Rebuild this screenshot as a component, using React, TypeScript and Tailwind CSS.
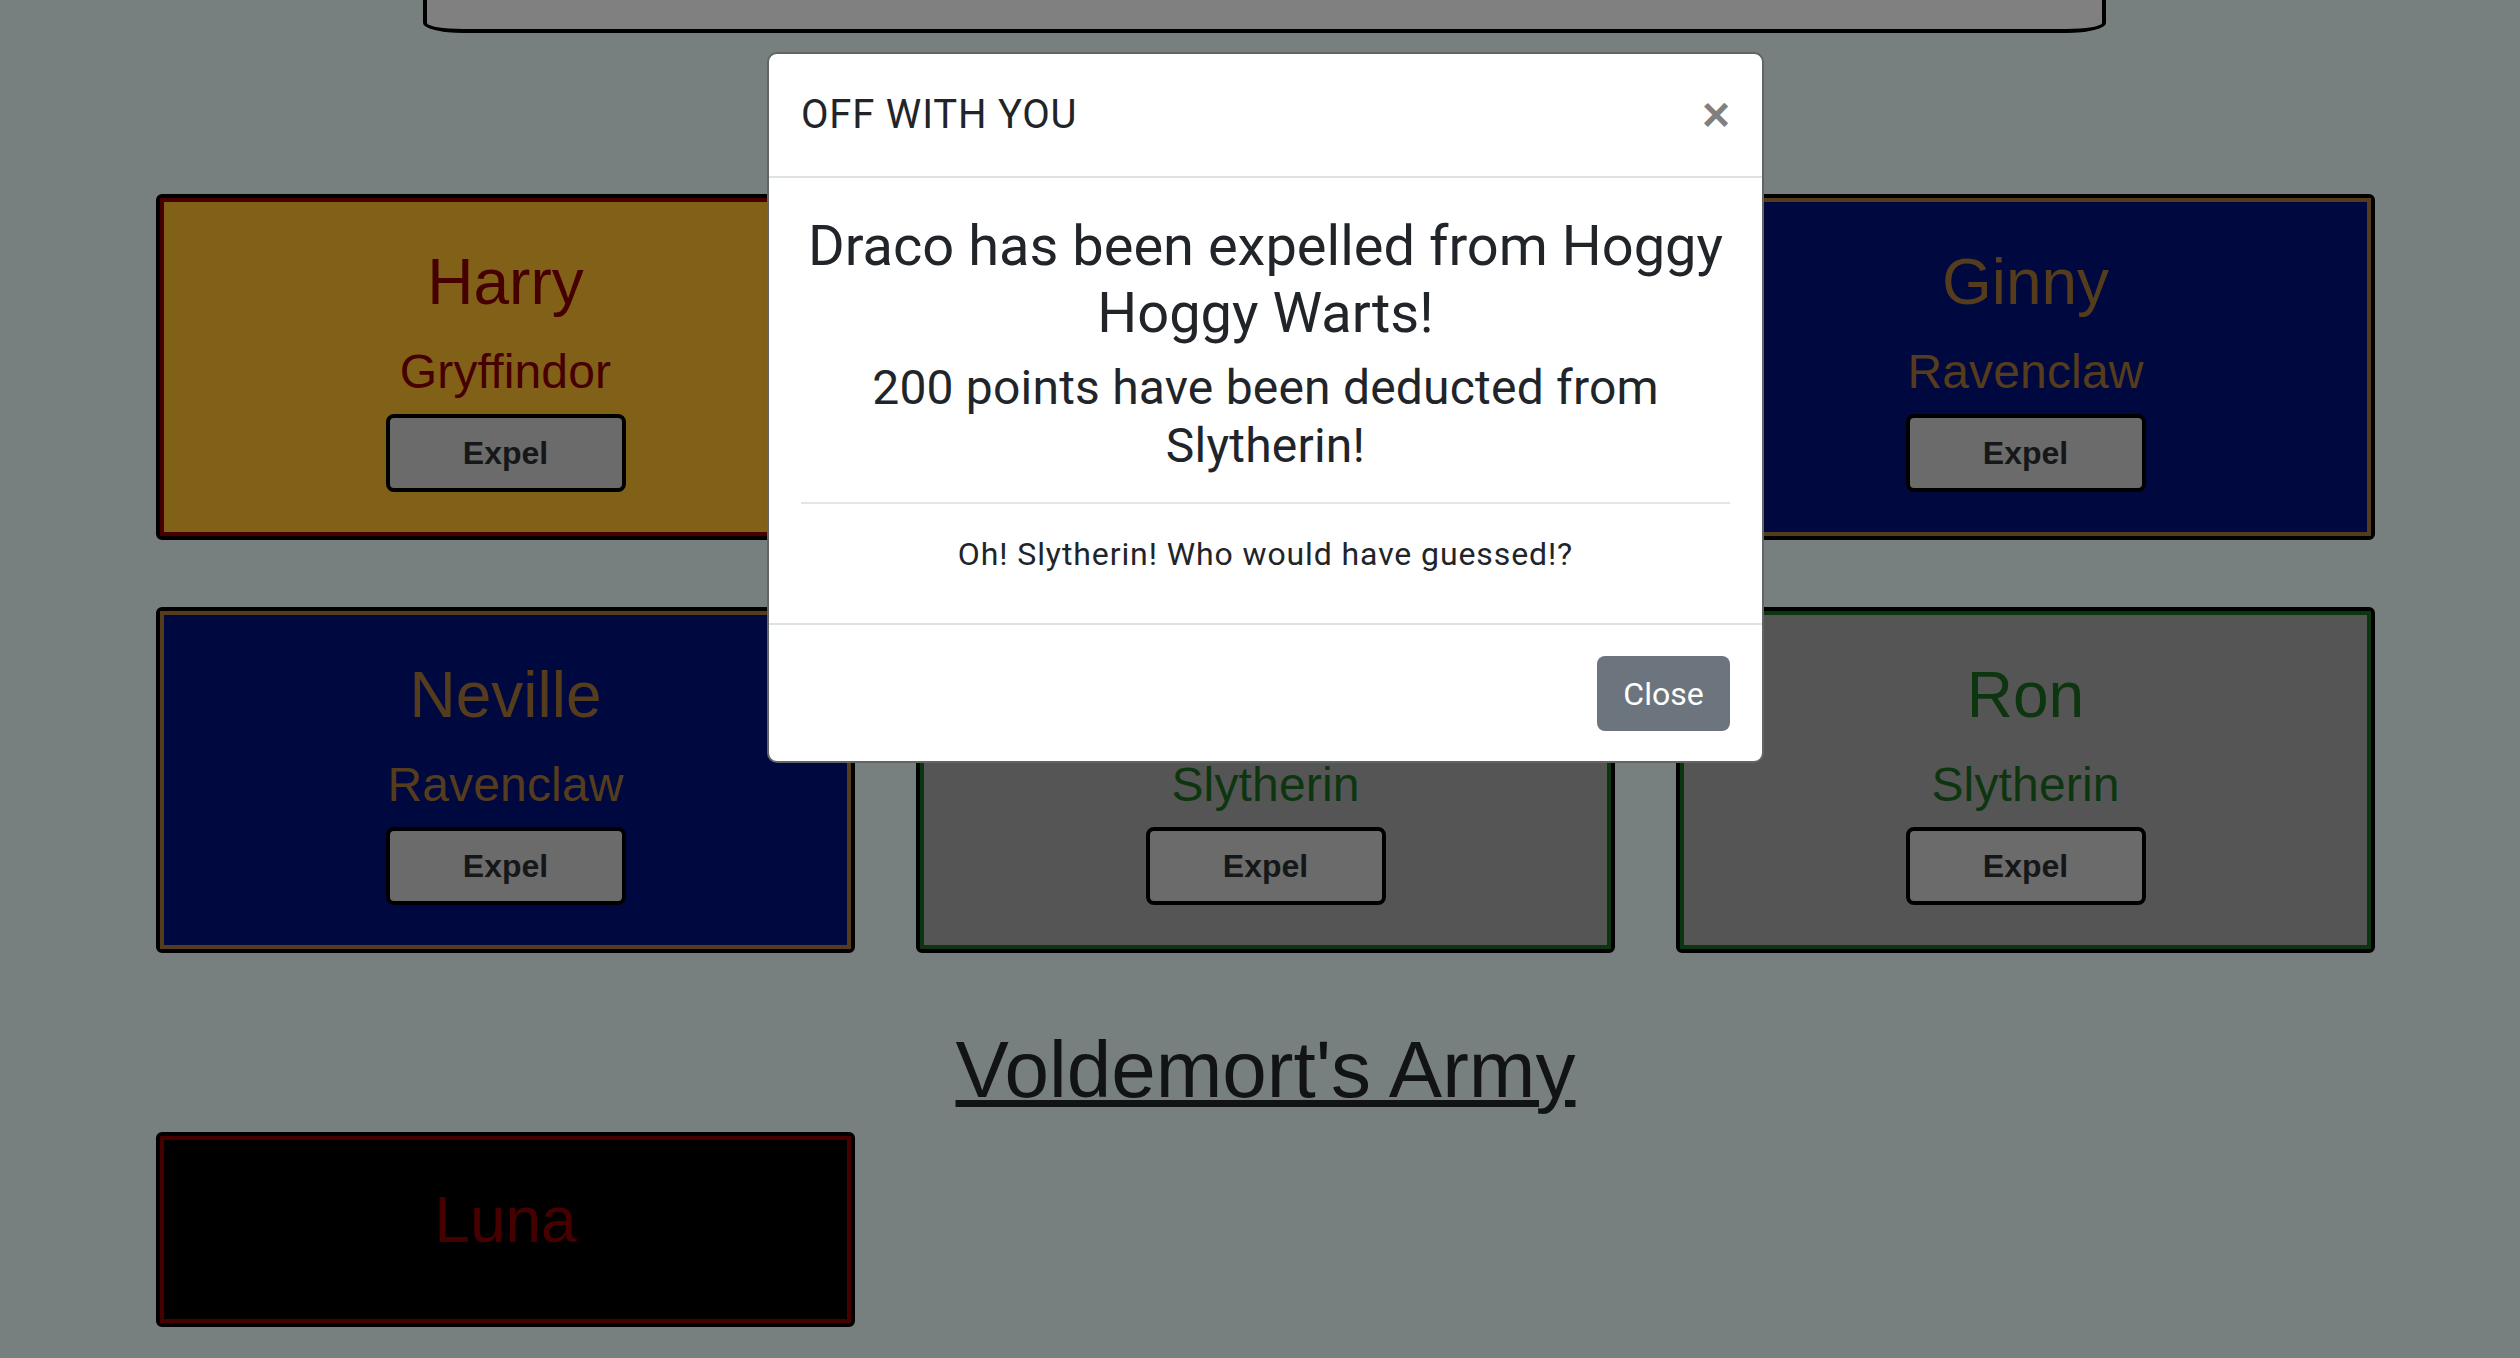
import React from "react";

type Student = {
  name: string;
  house?: string;
  fill: string;
  ring: string;
  text: string;
};

function Card({ s }: { s: Student }) {
  return (
    <div className="rounded-[6px] border-4 border-black">
      <div className={`border-4 ${s.ring} ${s.fill} ${s.text} text-center ${s.house ? "pt-[42px] pb-[40px]" : "pt-[42px] pb-[60px]"}`}>
        <h2 className="text-[64px] leading-[77px]">{s.name}</h2>
        {s.house && (
          <>
            <h4 className="mt-[22px] text-[48px] leading-[58px] tracking-[0.15px]">{s.house}</h4>
            <button className="mx-auto mt-[13px] flex h-[78px] w-[240px] items-center justify-center rounded-[8px] border-4 border-black bg-[#6b6b6b] text-[32px] font-bold text-[#151719]">
              Expel
            </button>
          </>
        )}
      </div>
    </div>
  );
}

const gold = { fill: "bg-[#816018]", ring: "border-[#470000]", text: "text-[#470000]" };
const blue = { fill: "bg-[#00093f]", ring: "border-[#553c1c]", text: "text-[#553c1c]" };
const green = { fill: "bg-[#555555]", ring: "border-[#0d3510]", text: "text-[#0d3510]" };
const dark = { fill: "bg-black", ring: "border-[#470000]", text: "text-[#470000]" };

const students: Student[] = [
  { name: "Harry", house: "Gryffindor", ...gold },
  { name: "Draco", house: "Slytherin", ...green },
  { name: "Ginny", house: "Ravenclaw", ...blue },
  { name: "Neville", house: "Ravenclaw", ...blue },
  { name: "Draco", house: "Slytherin", ...green },
  { name: "Ron", house: "Slytherin", ...green },
];

export default function App() {
  return (
    <div className="relative h-[1358px] overflow-hidden bg-[#78807f] font-['Liberation_Sans',Arial,sans-serif]">
      <div className="ml-[423px] h-[33px] w-[1683px] rounded-b-[40px_10px] border-x-4 border-b-4 border-black bg-[#808080]" />

      <div className="ml-[156px] w-[2219px]">
        <div className="mt-[161px] grid grid-cols-3 gap-x-[61px] gap-y-[67px]">
          {students.map((s, i) => (
            <Card key={i} s={s} />
          ))}
        </div>

        <h1 className="mt-[69px] text-center text-[80px] leading-[96px] text-[#111315]">
          <span className="underline decoration-[7px] underline-offset-[3px]">Voldemort's Army</span>
        </h1>

        <div className="mt-[14px] grid grid-cols-3 gap-x-[61px]">
          <Card s={{ name: "Luna", ...dark }} />
        </div>
      </div>

      <div className="absolute left-[767px] top-[52px] w-[997px] rounded-[10px] border-2 border-[#5f6665] bg-white font-['Roboto',sans-serif] text-[#212529]">
        <div className="flex items-center justify-between border-b-2 border-[#dee2e6] px-[32px] py-[31px]">
          <h5 className="text-[40px] leading-[60px] font-normal tracking-[0.8px]">OFF WITH YOU</h5>
          <button className="font-['Liberation_Sans',Arial,sans-serif] text-[48px] font-bold leading-none text-[#808080]">×</button>
        </div>
        <div className="px-[32px] pt-[35px] pb-[45px] text-center">
          <h3 className="text-[56px] leading-[67px] font-normal">Draco has been expelled from Hoggy Hoggy Warts!</h3>
          <h4 className="mt-[12px] text-[48px] leading-[58px] font-normal tracking-[0.2px]">200 points have been deducted from Slytherin!</h4>
          <hr className="mt-[27px] border-t-2 border-[#e5e5e5]" />
          <p className="mt-[26px] text-[32px] leading-[48px] tracking-[0.9px]">Oh! Slytherin! Who would have guessed!?</p>
        </div>
        <div className="flex justify-end border-t-2 border-[#dee2e6] px-[32px] pt-[31px] pb-[30px]">
          <button className="flex h-[75px] w-[133px] items-center justify-center rounded-[8px] bg-[#6c757d] text-[32px] leading-[48px] text-white">
            Close
          </button>
        </div>
      </div>
    </div>
  );
}
